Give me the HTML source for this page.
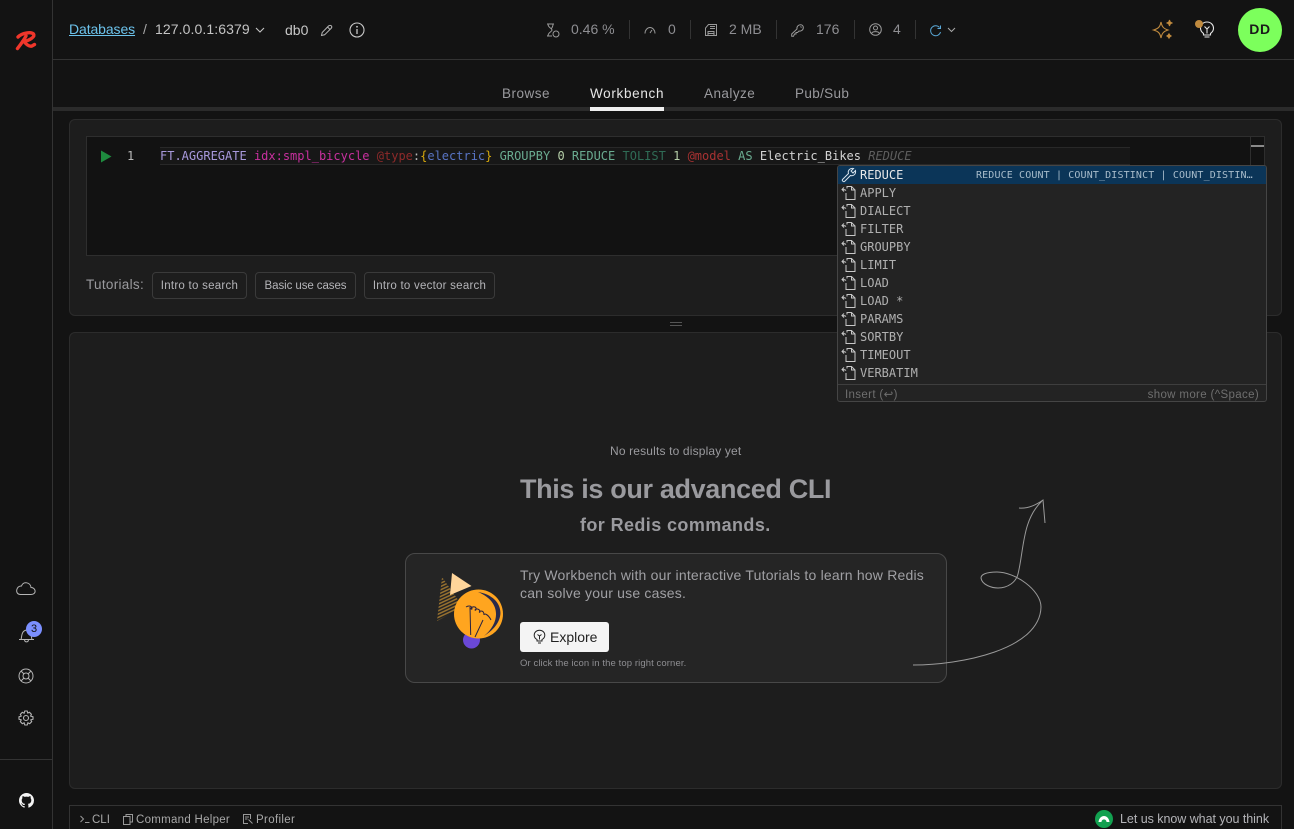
<!DOCTYPE html>
<html><head><meta charset="utf-8"><title>Workbench</title>
<style>
*{box-sizing:border-box}
html,body{margin:0;padding:0;width:1294px;height:829px;overflow:hidden;background:#131313;font-family:"Liberation Sans",sans-serif}
.a{position:absolute}
.t{position:absolute;white-space:nowrap;line-height:1}
.m{font-family:"DejaVu Sans Mono","Liberation Mono",monospace;font-size:12px;white-space:pre}
.sep{position:absolute;top:20px;width:1px;height:19px;background:#333}
.btn{position:absolute;top:272px;height:27px;border:1px solid #3a3a3a;border-radius:4px;color:#b4b4b8;font-size:11.5px;line-height:26px;text-align:center;white-space:nowrap}
.row{position:absolute;left:1px;width:428px;height:18px;line-height:18px;color:#b0b0b0}
.row svg{position:absolute;left:3px;top:1px}
.row span{position:absolute;left:22px;top:0}
svg{display:block;overflow:visible}
</style></head><body>
<svg width="0" height="0" style="position:absolute"><defs>
<symbol id="f" viewBox="0 0 16 16"><path d="M6 3.500V1.500H10.500L14 5V14.500H5V8M10.500 1.500V5H14M1 4.500C2.500 4.500 4 4.500 5 5.500M3 2.500L1 4.500L3 6.500" fill="none" stroke="#c8c8c8" stroke-width="1"/></symbol>
</defs></svg>

<!-- sidebar -->
<div class="a" style="left:0;top:0;width:53px;height:829px;background:#131313;border-right:1px solid #333"></div>
<div class="a" style="left:0;top:759px;width:52px;height:1px;background:#333"></div>
<svg class="a" style="left:14px;top:30px" width="24" height="22" viewBox="0 0 24 22"><path d="M4 7C8 3 17 1.500 19.500 4C21.500 7 15 10.500 10 11.500C12 14 15 17 18 16L20.500 14.500M12 6C10 10 7 14 3.500 18.500" fill="none" stroke="#f0362b" stroke-width="3.400" stroke-linecap="round"/></svg>
<svg class="a" style="left:15px;top:579px" width="21" height="17" viewBox="0 0 21 17"><path d="M5.500 15.500H16C22 15.500 21 8.500 16 8.500C15.500 3 8 2 6.500 7C1 6.500-.5 15.500 5.500 15.500Z" fill="none" stroke="#b5b5b5" stroke-width="1"/></svg>
<svg class="a" style="left:18px;top:626px" width="17" height="18" viewBox="0 0 17 18"><path d="M1 13.500H16M3 13.500C4 11 3 5 8.500 4C14 5 13 11 14 13.500M6.500 14C7 16.500 10 16.500 10.500 14" fill="none" stroke="#b5b5b5" stroke-width="1"/></svg>
<div class="a" style="left:26px;top:621px;width:16px;height:16px;border-radius:50%;background:#7b8fff;color:#111;font-size:11px;line-height:16px;text-align:center">3</div>
<svg class="a" style="left:18px;top:668px" width="16" height="16" viewBox="0 0 16 16"><g fill="none" stroke="#b5b5b5" stroke-width="1"><circle cx="8" cy="8" r="7"/><circle cx="8" cy="8" r="3"/><path d="M3 3L5.900 5.900M13 3L10.100 5.900M3 13L5.900 10.100M13 13L10.100 10.100"/></g></svg>
<svg class="a" style="left:18px;top:710px" width="16" height="16" viewBox="0 0 16 16"><g fill="none" stroke="#b5b5b5" stroke-width="1.100"><circle cx="8" cy="8" r="2.500"/><path d="M6.800 1H9.200L9.700 3L11.500 2.300L13.400 4.200L12.600 6L15 6.800V9.200L12.800 9.900L13.700 11.700L11.700 13.700L9.900 12.800L9.200 15H6.800L6.100 12.800L4.300 13.700L2.300 11.700L3.200 9.900L1 9.200V6.800L3.200 6.100L2.300 4.300L4.300 2.300L6.100 3.200Z"/></g></svg>
<svg class="a" style="left:19px;top:793px" width="15" height="15" viewBox="0 0 16 16"><path fill="#f4f4f4" d="M8 0C3.580 0 0 3.580 0 8c0 3.540 2.290 6.530 5.470 7.590.4.070.55-.17.55-.38v-1.340c-2.230.48-2.700-1.070-2.700-1.070-.36-.92-.89-1.170-.89-1.170-.73-.5.050-.49.050-.49.800.06 1.230.83 1.230.83.710 1.220 1.870.87 2.330.66.070-.52.280-.87.510-1.070-1.780-.2-3.640-.89-3.640-3.950 0-.87.310-1.590.820-2.150-.08-.2-.36-1.020.08-2.120 0 0 .67-.21 2.200.82a7.600 7.600 0 0 1 4 0c1.530-1.040 2.200-.82 2.200-.82.440 1.100.16 1.920.08 2.120.51.560.82 1.270.82 2.150 0 3.070-1.870 3.750-3.650 3.950.29.250.54.730.54 1.480v2.190c0 .21.150.46.550.38A8 8 0 0 0 16 8c0-4.420-3.580-8-8-8z"/></svg>

<!-- header -->
<div class="a" style="left:53px;top:59px;width:1241px;height:1px;background:#333"></div>
<div class="t" style="left:69px;top:22px;font-size:14px;color:#6cc3ec;text-decoration:underline;letter-spacing:-.1px">Databases</div>
<div class="t" style="left:143px;top:22px;font-size:14px;color:#a8a8a8">/</div>
<div class="t" style="left:155px;top:22px;font-size:14px;color:#c4c4c4;letter-spacing:.1px">127.0.0.1:6379</div>
<svg class="a" style="left:255px;top:27px" width="10" height="6" viewBox="0 0 10 6"><path d="M1 1L5 5L9 1" fill="none" stroke="#c4c4c4" stroke-width="1.100"/></svg>
<div class="t" style="left:285px;top:23px;font-size:14px;color:#c8c8c8">db0</div>
<svg class="a" style="left:320px;top:24px" width="13" height="13" viewBox="0 0 13 13"><path d="M1.500 11.500L2.200 8.500L8.500 2C9.500 1 11 1.300 11.500 2S12 3.500 11 4.500L4.600 10.800ZM7.500 3L10 5.500" fill="none" stroke="#b5b5b5" stroke-width="1"/></svg>
<svg class="a" style="left:349px;top:22px" width="16" height="16" viewBox="0 0 16 16"><circle cx="8" cy="8" r="7" fill="none" stroke="#c8c8c8" stroke-width="1.100"/><path d="M8 7V12" stroke="#c8c8c8" stroke-width="1.300"/><circle cx="8" cy="4.800" r=".9" fill="#c8c8c8"/></svg>

<svg class="a" style="left:546px;top:23px" width="14" height="15" viewBox="0 0 14 15"><g fill="none" stroke="#9a9a9a" stroke-width="1"><path d="M1 1H8M1 13H6M2 1C2 5 6 5 6 7S2 9 2 13M7 1C7 3 6 5 5 6"/><circle cx="10" cy="11" r="3"/></g></svg>
<div class="t" style="left:571px;top:22px;font-size:14px;color:#8e8e92">0.46 %</div>
<div class="sep" style="left:629px"></div>
<svg class="a" style="left:644px;top:26px" width="12" height="9" viewBox="0 0 12 9"><path d="M1 7.500C1 4 3.500 1.500 6 1.500S11 4 11 7.500M6 7L8 4" fill="none" stroke="#9a9a9a" stroke-width="1"/></svg>
<div class="t" style="left:668px;top:22px;font-size:14px;color:#8e8e92">0</div>
<div class="sep" style="left:690px"></div>
<svg class="a" style="left:705px;top:24px" width="12" height="12" viewBox="0 0 12 12"><path d="M.5 11.500V4L3.500.5H11.500V11.500ZM3 11.500V7.500H9V11.500M3 9.500H9M5 2.500H10M5 4.500H10" fill="none" stroke="#9a9a9a" stroke-width="1"/></svg>
<div class="t" style="left:729px;top:22px;font-size:14px;color:#8e8e92">2 MB</div>
<div class="sep" style="left:776px"></div>
<svg class="a" style="left:791px;top:24px" width="13" height="13" viewBox="0 0 13 13"><path d="M.7 12.300V10L6 5C5.500 2.500 7.500.7 9.500.7C11.300 .7 12.300 2 12.300 3.700C12.300 6 10 7.500 8 7L6.500 8.500H5V10H3.500L2.500 12.300ZM9.500 2.500L10.500 3.500" fill="none" stroke="#9a9a9a" stroke-width="1"/></svg>
<div class="t" style="left:816px;top:22px;font-size:14px;color:#8e8e92">176</div>
<div class="sep" style="left:854px"></div>
<svg class="a" style="left:869px;top:23px" width="13" height="13" viewBox="0 0 13 13"><g fill="none" stroke="#9a9a9a" stroke-width="1"><circle cx="6.500" cy="6.500" r="5.800"/><circle cx="6.500" cy="5" r="2"/><path d="M2.500 10.500C3.500 8 9.500 8 10.500 10.500"/></g></svg>
<div class="t" style="left:893px;top:22px;font-size:14px;color:#8e8e92">4</div>
<div class="sep" style="left:915px"></div>
<svg class="a" style="left:929px;top:24px" width="13" height="13" viewBox="0 0 13 13"><path d="M10.500 3.500A5 5 0 1 0 11.500 8M11.500 1.500V4.500H8.500" fill="none" stroke="#5aa9d8" stroke-width="1"/></svg>
<svg class="a" style="left:947px;top:27px" width="9" height="6" viewBox="0 0 9 6"><path d="M1 1L4.500 4.500L8 1" fill="none" stroke="#a8a8a8" stroke-width="1"/></svg>

<svg class="a" style="left:1152px;top:18px" width="22" height="22" viewBox="0 0 22 22"><g stroke="#c08a3e" stroke-width="1.100"><path d="M9 4C10 9 11.500 10.500 16 12C11.500 13.500 10 15 9 20C8 15 6.500 13.500 1.500 12C6.500 10.500 8 9 9 4Z" fill="none"/><path d="M17.500 2C17.800 4 18.500 4.700 20.500 5C18.500 5.300 17.800 6 17.500 8C17.200 6 16.500 5.300 14.500 5C16.500 4.700 17.200 4 17.500 2ZM17 15.500C17.300 17 18 17.700 19.500 18C18 18.300 17.300 19 17 20.500C16.700 19 16 18.300 14.500 18C16 17.700 16.700 17 17 15.500Z" fill="#c08a3e"/></g></svg>
<svg class="a" style="left:1198px;top:20px" width="18" height="19" viewBox="0 0 18 19"><path d="M5.500 13.500C3.500 12 2.500 10.500 2.500 8.300C2.500 4.700 5.300 2 9 2S15.500 4.700 15.500 8.300C15.500 10.500 14.500 12 12.500 13.500V15H5.500ZM6.500 17H11.500M9 13.500V9L6.500 6.500M9 9L11.500 6.500" fill="none" stroke="#e4e4e4" stroke-width="1.100"/></svg>
<div class="a" style="left:1195px;top:20px;width:8px;height:8px;border-radius:50%;background:#c08a3e"></div>
<div class="a" style="left:1238px;top:8px;width:44px;height:44px;border-radius:50%;background:#7cff5c;color:#1a1a1a;font-size:14px;font-weight:bold;line-height:42px;text-align:center;letter-spacing:.6px">DD</div>

<!-- tabs -->
<div class="t" style="left:502px;top:87px;font-size:13.500px;color:#9a9a9e;letter-spacing:.5px">Browse</div>
<div class="t" style="left:590px;top:87px;font-size:13.500px;color:#e6e6e6;letter-spacing:.68px">Workbench</div>
<div class="t" style="left:704px;top:87px;font-size:13.500px;color:#9a9a9e;letter-spacing:.45px">Analyze</div>
<div class="t" style="left:795px;top:87px;font-size:13.500px;color:#9a9a9e;letter-spacing:.35px">Pub/Sub</div>
<div class="a" style="left:53px;top:107px;width:1241px;height:4px;background:#2b2b2b"></div>
<div class="a" style="left:590px;top:107px;width:74px;height:4px;background:#eee"></div>

<!-- panel 1 -->
<div class="a" style="left:69px;top:119px;width:1213px;height:197px;background:#1d1d1d;border:1px solid #2c2c2c;border-radius:6px"></div>
<div class="a" style="left:86px;top:136px;width:1179px;height:120px;background:#121212;border:1px solid #2e2e2e"></div>
<div class="a" style="left:1250px;top:137px;width:14px;height:118px;border-left:1px solid #2e2e2e"></div>
<div class="a" style="left:1251px;top:145px;width:13px;height:2px;background:#8a8a8a"></div>
<svg class="a" style="left:100px;top:150px" width="12" height="13" viewBox="0 0 12 13"><path d="M1 .5L11.500 6.500L1 12.500Z" fill="#1e8a3e"/></svg>
<div class="t m" style="left:127px;top:150px;color:#b8b8b8">1</div>
<div class="a" style="left:160px;top:147px;width:970px;height:18px;background:#171717;border-top:1px solid #282828;border-bottom:1px solid #282828"></div>
<div class="t m" style="left:160px;top:150px;color:#b8b8b8"><span style="color:#a899dc">FT.AGGREGATE</span> <span style="color:#c8309e">idx:smpl_bicycle</span> <span style="color:#8e2a2a">@type</span>:<span style="color:#d6a80c">{</span><span style="color:#5874c4">electric</span><span style="color:#d6a80c">}</span> <span style="color:#6aab90">GROUPBY</span> <span style="color:#b5cea8">0</span> <span style="color:#6aab90">REDUCE</span> <span style="color:#2f6b55">TOLIST</span> <span style="color:#b5cea8">1</span> <span style="color:#a83232">@model</span> <span style="color:#6aab90">AS</span> <span style="color:#d4d4d4">Electric_Bikes</span> <i style="color:#5e5e5e">REDUCE</i></div>

<div class="t" style="left:86px;top:278px;font-size:13.500px;color:#9a9a9e;letter-spacing:.3px">Tutorials:</div>
<div class="btn" style="left:152px;width:95px;letter-spacing:.26px">Intro to search</div>
<div class="btn" style="left:255px;width:101px;letter-spacing:-.08px">Basic use cases</div>
<div class="btn" style="left:364px;width:131px;letter-spacing:.24px">Intro to vector search</div>

<div class="a" style="left:670px;top:322px;width:12px;height:1px;background:#555"></div>
<div class="a" style="left:670px;top:325px;width:12px;height:1px;background:#555"></div>

<!-- panel 2 -->
<div class="a" style="left:69px;top:332px;width:1213px;height:457px;background:#1d1d1d;border:1px solid #2c2c2c;border-radius:6px"></div>
<div class="t" style="left:610px;top:445px;font-size:12px;color:#9a9a9e;letter-spacing:.16px">No results to display yet</div>
<div class="t" style="left:520px;top:476px;font-size:27px;font-weight:bold;color:#9a9a9e;letter-spacing:-.35px">This is our advanced CLI</div>
<div class="t" style="left:580px;top:516px;font-size:18px;font-weight:bold;color:#9a9a9e;letter-spacing:.4px">for Redis commands.</div>

<div class="a" style="left:405px;top:553px;width:542px;height:130px;background:#252525;border:1px solid #484848;border-radius:10px"></div>
<svg class="a" style="left:430px;top:565px" width="90" height="90" viewBox="430 565 90 90">
<defs><pattern id="s" width="3" height="3" patternUnits="userSpaceOnUse" patternTransform="rotate(-25)"><rect width="3" height="1.500" fill="#96702f"/></pattern></defs>
<path d="M442 577L437 621L463 607Z" fill="url(#s)"/>
<path d="M452 573L471.500 586L450 595Z" fill="#ffd59a"/>
<circle cx="471.500" cy="640" r="8.500" fill="#6a48d7"/>
<circle cx="478.500" cy="614" r="24.500" fill="#ffa51f"/>
<path d="M478 592C503 596 510 620 484 636C500 623 502 602 478 592Z" fill="#2a2a4a"/>
<path d="M470 607L470.700 635M483 620L475 637M466 607C469 605 472 606 472 609C470 610 471 606 475 607C477 608 476 611 475 610C476 608 480 609 480 612C479 613 479 611 481 611C484 611 484 614 484 615C484 613 488 614 491 620" fill="none" stroke="#2a2340" stroke-width="1"/>
</svg>
<div class="t" style="left:520px;top:568px;font-size:14px;color:#a0a0a4;letter-spacing:.2px">Try Workbench with our interactive Tutorials to learn how Redis</div>
<div class="t" style="left:520px;top:586px;font-size:14px;color:#a0a0a4;letter-spacing:.2px">can solve your use cases.</div>
<div class="a" style="left:520px;top:622px;width:89px;height:30px;background:#f4f4f4;border-radius:3px"></div>
<svg class="a" style="left:533px;top:629px" width="13" height="16" viewBox="0 0 13 16"><path d="M4 10.500C2.200 9.500 1.200 8 1.200 6.200C1.200 3.300 3.500 1.200 6.500 1.200S11.800 3.300 11.800 6.200C11.800 8 10.800 9.500 9 10.500V12H4ZM5 14H8M6.500 10.500V7L4.500 5.500M6.500 7L8.500 5.500" fill="none" stroke="#222" stroke-width="1"/></svg>
<div class="t" style="left:550px;top:630px;font-size:14px;color:#222">Explore</div>
<div class="t" style="left:520px;top:659px;font-size:9.500px;color:#8e8e92;letter-spacing:.1px">Or click the icon in the top right corner.</div>
<svg class="a" style="left:0;top:0;pointer-events:none" width="1294" height="829" viewBox="0 0 1294 829"><path d="M913 665C960 665 1040 650 1041 607C1041 590 1015 572 997 572C985 572 981 575 981 578C982 585 992 588 998 588C1008 588 1016 582 1018 574C1024 550 1022 520 1042 501M1019 508C1028 509 1036 505 1043 500L1045 523" fill="none" stroke="#9a9a9a" stroke-width="1"/></svg>

<!-- suggest widget -->
<div class="a m" style="left:837px;top:165px;width:430px;height:237px;background:#232323;border:1px solid #454545;border-radius:3px;overflow:hidden">
<div class="a" style="left:0;top:0;width:428px;height:18px;background:#0b3558"></div>
<div class="row" style="left:0;top:0;color:#e8e8e8"><svg width="16" height="16" viewBox="0 0 16 16" style="left:3px;top:1px"><path d="M1.500 12.500L7.500 6.500C6.500 3.500 9 .8 12.500 1.500L10 4L12 6L14.500 3.500C15.200 7 12.500 9.500 9.500 8.500L3.500 14.500C2.500 15.300 .7 13.500 1.500 12.500Z" fill="none" stroke="#d8e4ee" stroke-width="1"/></svg><span>REDUCE</span></div>
<div class="a" style="left:138px;top:1px;height:18px;line-height:18px;font-size:10px;letter-spacing:.13px;color:#a8bccb">REDUCE COUNT | COUNT_DISTINCT | COUNT_DISTIN…</div>
<div class="row" style="left:0;top:18px"><svg width="16" height="16"><use href="#f"/></svg><span>APPLY</span></div>
<div class="row" style="left:0;top:36px"><svg width="16" height="16"><use href="#f"/></svg><span>DIALECT</span></div>
<div class="row" style="left:0;top:54px"><svg width="16" height="16"><use href="#f"/></svg><span>FILTER</span></div>
<div class="row" style="left:0;top:72px"><svg width="16" height="16"><use href="#f"/></svg><span>GROUPBY</span></div>
<div class="row" style="left:0;top:90px"><svg width="16" height="16"><use href="#f"/></svg><span>LIMIT</span></div>
<div class="row" style="left:0;top:108px"><svg width="16" height="16"><use href="#f"/></svg><span>LOAD</span></div>
<div class="row" style="left:0;top:126px"><svg width="16" height="16"><use href="#f"/></svg><span>LOAD *</span></div>
<div class="row" style="left:0;top:144px"><svg width="16" height="16"><use href="#f"/></svg><span>PARAMS</span></div>
<div class="row" style="left:0;top:162px"><svg width="16" height="16"><use href="#f"/></svg><span>SORTBY</span></div>
<div class="row" style="left:0;top:180px"><svg width="16" height="16"><use href="#f"/></svg><span>TIMEOUT</span></div>
<div class="row" style="left:0;top:198px"><svg width="16" height="16"><use href="#f"/></svg><span>VERBATIM</span></div>
<div class="a" style="left:0;top:218px;width:428px;height:1px;background:#3e3e3e"></div>
<div class="t" style="left:7px;top:224px;font-family:'Liberation Sans',sans-serif;font-size:11.500px;letter-spacing:.35px;color:#6f6f6f">Insert (↩)</div>
<div class="t" style="right:7px;top:224px;font-family:'Liberation Sans',sans-serif;font-size:11.500px;letter-spacing:.35px;color:#6f6f6f">show more (^Space)</div>
</div>

<!-- bottom bar -->
<div class="a" style="left:69px;top:805px;width:1213px;height:24px;border:1px solid #333;border-bottom:none"></div>
<svg class="a" style="left:80px;top:815px" width="10" height="8" viewBox="0 0 10 8"><path d="M.5 1L3.500 4L.5 7M5 7.500H9.500" fill="none" stroke="#999" stroke-width="1"/></svg>
<div class="t" style="left:92px;top:815px;font-size:11.500px;color:#a8a8a8">CLI</div>
<svg class="a" style="left:123px;top:814px" width="10" height="11" viewBox="0 0 10 11"><path d="M3 2.500V.5H9.500V8H7.500M.5 2.500H7V10.500H.5Z" fill="none" stroke="#999" stroke-width="1"/></svg>
<div class="t" style="left:136px;top:815px;font-size:11.500px;color:#a8a8a8;letter-spacing:.28px">Command Helper</div>
<svg class="a" style="left:243px;top:814px" width="10" height="10" viewBox="0 0 10 10"><path d="M7.500 5V.5H.5V9.500H5M2 3H6M2 5H4.500M5.500 5.500L8 8M9.500 9.500L8 8" fill="none" stroke="#999" stroke-width="1"/></svg>
<div class="t" style="left:256px;top:815px;font-size:11.500px;color:#a8a8a8;letter-spacing:.35px">Profiler</div>
<svg class="a" style="left:1095px;top:810px" width="18" height="18" viewBox="0 0 18 18"><circle cx="9" cy="9" r="9" fill="#12a150"/><path d="M3.500 12C4 8 6.500 6 9 6S14 8 14.500 12H11.500C11.500 10.500 10.500 9.500 9 9.500S6.500 10.500 6.500 12Z" fill="#fff"/></svg>
<div class="t" style="left:1120px;top:813px;font-size:12.500px;color:#b4b4b8;letter-spacing:-.04px">Let us know what you think</div>
</body></html>
